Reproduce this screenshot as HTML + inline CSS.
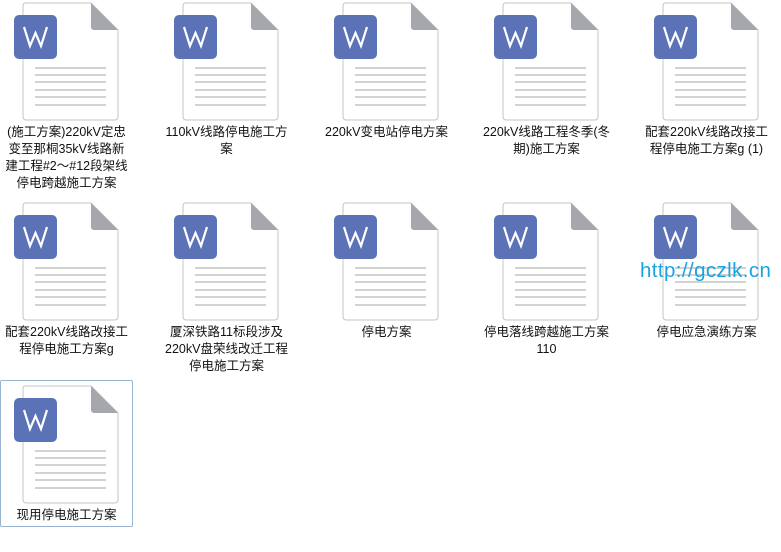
<!DOCTYPE html>
<html><head><meta charset="utf-8"><style>
body{margin:0;width:781px;height:552px;background:#fff;position:relative;overflow:hidden;font-family:"Liberation Sans","Noto Sans CJK SC",sans-serif}
.c{position:absolute;width:133px}
.c svg{position:absolute;left:0;top:0}
.t{position:absolute;left:-2px;width:137px;text-align:center;font-size:12.5px;line-height:17px;color:#111}
.sel{position:absolute;left:0;top:380px;width:133px;height:147px;border:1px solid #99b4d1;border-radius:2px;box-sizing:border-box}
.wm{position:absolute;left:640px;top:259px;font-size:20.5px;color:#1aa3e0;letter-spacing:0.4px}
</style></head><body>
<svg width="0" height="0" style="position:absolute"><defs>
<g id="ic">
<path d="M25 3 H91 L118 30 V117 a3 3 0 0 1 -3 3 H26 a3 3 0 0 1 -3 -3 V6 a3 3 0 0 1 2 -3z" fill="#fff" stroke="#c4c4c8" stroke-width="1"/>
<path d="M91 3 L118 30 H94 a3 3 0 0 1 -3 -3z" fill="#a6a6ad"/>
<g stroke="#d2d2d2" stroke-width="2"><line x1="35" y1="68" x2="106" y2="68"/><line x1="35" y1="75" x2="106" y2="75"/><line x1="35" y1="82" x2="106" y2="82"/><line x1="35" y1="90" x2="106" y2="90"/><line x1="35" y1="97" x2="106" y2="97"/><line x1="35" y1="105" x2="106" y2="105"/></g>
<rect x="14" y="15" width="43" height="44" rx="5" fill="#5b73b6"/>
<path d="M24 27 L30 46 L35.5 33 L41 46 L47 27" fill="none" stroke="#fff" stroke-width="2.2" stroke-linejoin="miter"/>
</g></defs></svg>
<div class="sel"></div>

<div class="c" style="left:0;top:0"><svg width="133" height="125"><use href="#ic"/></svg><div class="t" style="top:124px">(施工方案)220kV定忠<br>变至那桐35kV线路新<br>建工程#2～#12段架线<br>停电跨越施工方案</div></div>
<div class="c" style="left:160px;top:0"><svg width="133" height="125"><use href="#ic"/></svg><div class="t" style="top:124px">110kV线路停电施工方<br>案</div></div>
<div class="c" style="left:320px;top:0"><svg width="133" height="125"><use href="#ic"/></svg><div class="t" style="top:124px">220kV变电站停电方案</div></div>
<div class="c" style="left:480px;top:0"><svg width="133" height="125"><use href="#ic"/></svg><div class="t" style="top:124px">220kV线路工程冬季(冬<br>期)施工方案</div></div>
<div class="c" style="left:640px;top:0"><svg width="133" height="125"><use href="#ic"/></svg><div class="t" style="top:124px">配套220kV线路改接工<br>程停电施工方案g (1)</div></div>

<div class="c" style="left:0;top:200px"><svg width="133" height="125"><use href="#ic"/></svg><div class="t" style="top:124px">配套220kV线路改接工<br>程停电施工方案g</div></div>
<div class="c" style="left:160px;top:200px"><svg width="133" height="125"><use href="#ic"/></svg><div class="t" style="top:124px">厦深铁路11标段涉及<br>220kV盘荣线改迁工程<br>停电施工方案</div></div>
<div class="c" style="left:320px;top:200px"><svg width="133" height="125"><use href="#ic"/></svg><div class="t" style="top:124px">停电方案</div></div>
<div class="c" style="left:480px;top:200px"><svg width="133" height="125"><use href="#ic"/></svg><div class="t" style="top:124px">停电落线跨越施工方案<br>110</div></div>
<div class="c" style="left:640px;top:200px"><svg width="133" height="125"><use href="#ic"/></svg><div class="t" style="top:124px">停电应急演练方案</div></div>

<div class="c" style="left:0;top:383px"><svg width="133" height="125"><use href="#ic"/></svg><div class="t" style="top:124px">现用停电施工方案</div></div>

<div class="wm">http://gczlk.cn</div>
</body></html>
